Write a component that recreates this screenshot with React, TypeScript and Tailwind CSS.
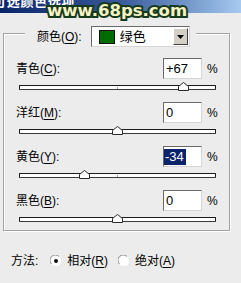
import React from 'react';

interface Channel {
  label: string;
  hotkey: string;
  text: string;
  value: number;
  selected?: boolean;
}

const channels: Channel[] = [
  { label: '青色', hotkey: 'C', text: '+67', value: 67 },
  { label: '洋红', hotkey: 'M', text: '0', value: 0 },
  { label: '黄色', hotkey: 'Y', text: '-34', value: -34, selected: true },
  { label: '黑色', hotkey: 'B', text: '0', value: 0 },
];

// sunken edit box border, classic windows style
const sunken =
  'border border-t-[#6a6a6a] border-l-[#6a6a6a] border-r-[#d6d6d6] border-b-[#d6d6d6] bg-white';

const Thumb: React.FC<{ left: number }> = ({ left }) => (
  <svg
    width="11"
    height="9"
    viewBox="0 0 11 9"
    className="absolute top-0"
    style={{ left }}
  >
    <path d="M0.5 8.5V4.5L5.5 0.5L10.5 4.5V8.5Z" fill="#fff" stroke="#2a2a2a" />
  </svg>
);

const Slider: React.FC<{ value: number }> = ({ value }) => {
  // track is 196px wide, -100..100
  const center = ((value + 100) / 200) * 196;
  return (
    <div className="relative ml-[3px] mt-[3px] h-[9px] w-[197px] pt-[3px]">
      <div className="relative h-[5px] rounded-[1px] border border-[#1c1c1c] border-b-[#3a3a3a] bg-white">
        <div className="absolute bottom-0 left-[97px] h-[2px] w-px bg-[#a0a0a0]" />
      </div>
      <Thumb left={Math.round(center - 5)} />
    </div>
  );
};

const Radio: React.FC<{ checked?: boolean }> = ({ checked }) => (
  <svg width="12" height="12" viewBox="0 0 12 12">
    <circle cx="6" cy="6" r="5.5" fill="#fff" />
    <path d="M1.5 9A5 5 0 0 1 9 1.5" fill="none" stroke="#8c8c8c" />
    <path d="M10.5 3A5 5 0 0 1 3 10.5" fill="none" stroke="#e2e2e2" />
    {checked && <circle cx="6" cy="6" r="2" fill="#111" />}
  </svg>
);

export default function App() {
  return (
    <div className="relative h-[283px] w-[241px] overflow-hidden bg-[#ececec] font-['Liberation_Sans','Noto_Sans_CJK_SC',sans-serif] text-black">
      {/* title bar, cut off at the top */}
      <div className="flex h-[13px] overflow-hidden bg-linear-to-r from-[#0a246a] via-[#3a5a9a] to-[#a6caf0]">
        <span className="-ml-[7px] -mt-[5px] block whitespace-nowrap text-[13px] font-bold leading-[13px] tracking-[0.7px] text-white">
          可选颜色选项
        </span>
      </div>

      {/* site watermark */}
      <div className="absolute left-[47px] top-[-1px] whitespace-nowrap font-['DejaVu_Sans',sans-serif] text-[16.5px] font-bold leading-[24px] text-[#f6f2c4] [-webkit-text-stroke:4px_#163a1c] [paint-order:stroke_fill]">
        www.68ps.com
      </div>

      <div className="pt-[13px]">
        <fieldset className="ml-[3px] w-[227px] border border-[#a3a3a3] pb-[7px] pl-[12px] shadow-[1px_1px_0_#fff,inset_1px_1px_0_#fff]">
          <legend className="ml-[9px] h-[15px] bg-[#ececec] pl-[12px] pr-[6px]">
            <div className="flex h-[21px] items-center">
              <span className="text-[12px]">
                颜色(<u className="underline-offset-2">O</u>):
              </span>
              <div className={`ml-[9px] flex h-[21px] w-[99px] items-center ${sunken}`}>
                <div className="ml-[7px] h-[14px] w-[16px] border border-[#111] bg-[#006b00]" />
                <span className="ml-[5px] text-[13px] leading-none">绿色</span>
                <div className="ml-auto mr-[1px] flex h-[17px] w-[15px] items-center justify-center border border-t-white border-l-white border-r-[#404040] border-b-[#404040] bg-[#d4d0c8]">
                  <svg width="7" height="4" viewBox="0 0 7 4">
                    <path d="M0 0H7L3.5 4Z" fill="#000" />
                  </svg>
                </div>
              </div>
            </div>
          </legend>

          <div className="flex flex-col gap-[11px] pt-[17px]">
            {channels.map((c) => (
              <div key={c.hotkey}>
                <div className="flex h-[21px] items-center">
                  <span className="w-[147px] text-[12px]">
                    {c.label}(<u className="underline-offset-2">{c.hotkey}</u>):
                  </span>
                  <div className={`h-[21px] w-[39px] text-[13px] leading-[19px] ${sunken} ${c.selected ? 'pl-0' : 'pl-[2px]'}`}>
                    {c.selected ? (
                      <span className="mt-[1px] inline-block h-[16px] bg-[#0a246a] pl-[1px] pr-[2px] leading-[16px] text-white">
                        {c.text}
                      </span>
                    ) : (
                      c.text
                    )}
                  </div>
                  <span className="ml-[5px] text-[12px]">%</span>
                </div>
                <Slider value={c.value} />
              </div>
            ))}
          </div>
        </fieldset>

        <div className="mt-[22px] flex h-[16px] items-center pl-[11px] text-[12px]">
          <span>方法:</span>
          <span className="ml-[12px] flex items-center">
            <Radio checked />
          </span>
          <span className="ml-[5px]">
            相对(<u className="underline-offset-2">R</u>)
          </span>
          <span className="ml-[10px] flex items-center">
            <Radio />
          </span>
          <span className="ml-[5px]">
            绝对(<u className="underline-offset-2">A</u>)
          </span>
        </div>
      </div>
    </div>
  );
}
